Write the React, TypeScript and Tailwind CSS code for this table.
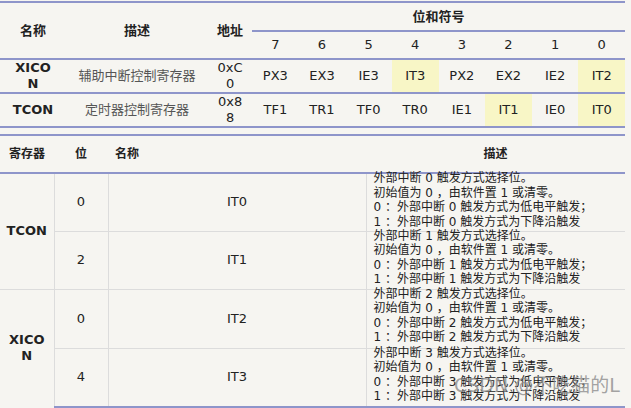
import React from "react";

const FONT = { fontFamily: '"DejaVu Sans", "Noto Sans CJK SC", sans-serif' };

const bits = ["7", "6", "5", "4", "3", "2", "1", "0"];
const xicon = ["PX3", "EX3", "IE3", "IT3", "PX2", "EX2", "IE2", "IT2"];
const tcon = ["TF1", "TR1", "TF0", "TR0", "IE1", "IT1", "IE0", "IT0"];
const hlX = [false, false, false, true, false, false, false, true];
const hlT = [false, false, false, false, false, true, false, true];

function Desc({ n }: { n: string }) {
  return (
    <div className="-mt-[3px] text-[12px] leading-[14.5px] text-[#222]">
      <div>外部中断 {n} 触发方式选择位。</div>
      <div>初始值为 0 ，由软件置 1 或清零。</div>
      <div>0 ：外部中断 {n} 触发方式为低电平触发；</div>
      <div>1 ：外部中断 {n} 触发方式为下降沿触发</div>
    </div>
  );
}

export default function App() {
  return (
    <div className="relative w-[631px] h-[408px] overflow-hidden bg-[#f6f5f1] text-[#222]" style={FONT}>
      <table className="table-fixed border-collapse w-[625px] mt-[1px] text-[13px] leading-[16px]">
        <colgroup>
          <col className="w-[66px]" />
          <col className="w-[142px]" />
          <col className="w-[44px]" />
          {bits.map((b) => (
            <col key={b} className="w-[46.6px]" />
          ))}
        </colgroup>
        <thead>
          <tr className="h-[29px]">
            <th rowSpan={2} className="border-t-2 border-b-2 border-[#8e95ca] font-bold text-[13px]">名称</th>
            <th rowSpan={2} className="border-t-2 border-b-2 border-[#8e95ca] font-bold text-[13px]">描述</th>
            <th rowSpan={2} className="border-t-2 border-b-2 border-[#8e95ca] font-bold text-[13px]">地址</th>
            <th colSpan={8} className="border-t-2 border-b-2 border-[#8e95ca] font-bold text-[13px]">位和符号</th>
          </tr>
          <tr className="h-[28px]">
            {bits.map((b) => (
              <td key={b} className="border-b-2 border-[#8e95ca] text-center font-normal">{b}</td>
            ))}
          </tr>
        </thead>
        <tbody>
          <tr className="h-[32px]">
            <td className="border-b-2 border-[#8e95ca] text-center font-bold px-[11px] break-all">XICON</td>
            <td className="border-b-2 border-[#8e95ca] text-center text-[#555]">辅助中断控制寄存器</td>
            <td className="border-b-2 border-[#8e95ca] text-center px-[8px] break-all">0xC0</td>
            {xicon.map((v, i) => (
              <td key={v} className={"border-b-2 border-[#8e95ca] text-center " + (hlX[i] ? "bg-[#f8f6c6]" : "")}>{v}</td>
            ))}
          </tr>
          <tr className="h-[32px]">
            <td className="border-b-2 border-[#8e95ca] text-center font-bold px-[11px] break-all">TCON</td>
            <td className="border-b-2 border-[#8e95ca] text-center text-[#555]">定时器控制寄存器</td>
            <td className="border-b-2 border-[#8e95ca] text-center px-[8px] break-all">0x88</td>
            {tcon.map((v, i) => (
              <td key={v} className={"border-b-2 border-[#8e95ca] text-center " + (hlT[i] ? "bg-[#f8f6c6]" : "")}>{v}</td>
            ))}
          </tr>
        </tbody>
      </table>

      <table className="table-fixed border-collapse w-[625px] mt-[6px] text-[13px] leading-[16px]">
        <colgroup>
          <col className="w-[54px]" />
          <col className="w-[54px]" />
          <col className="w-[258px]" />
          <col className="w-[259px]" />
        </colgroup>
        <thead>
          <tr className="h-[38px]">
            <th className="border-t-2 border-b-2 border-[#8e95ca] text-[12px] font-bold text-center">寄存器</th>
            <th className="border-t-2 border-b-2 border-[#8e95ca] text-[12px] font-bold text-center">位</th>
            <th className="border-t-2 border-b-2 border-[#8e95ca] text-[12px] font-bold text-left pl-[7px]">名称</th>
            <th className="border-t-2 border-b-2 border-[#8e95ca] text-[12px] font-bold text-center">描述</th>
          </tr>
        </thead>
        <tbody>
          <tr className="h-[58px]">
            <td rowSpan={2} className="border-b border-r border-[#dcdcdc] text-center font-bold">TCON</td>
            <td className="border-b border-r border-[#dcdcdc] text-center">0</td>
            <td className="border-b border-r border-[#dcdcdc] text-center">IT0</td>
            <td className="border-b border-[#dcdcdc] align-top pl-[7px]"><Desc n="0" /></td>
          </tr>
          <tr className="h-[58px]">
            <td className="border-b border-r border-[#dcdcdc] text-center">2</td>
            <td className="border-b border-r border-[#dcdcdc] text-center">IT1</td>
            <td className="border-b border-[#dcdcdc] align-top pl-[7px]"><Desc n="1" /></td>
          </tr>
          <tr className="h-[59px]">
            <td rowSpan={2} className="border-r border-[#dcdcdc] text-center font-bold px-[8px] break-all">XICON</td>
            <td className="border-b border-r border-[#dcdcdc] text-center">0</td>
            <td className="border-b border-r border-[#dcdcdc] text-center">IT2</td>
            <td className="border-b border-[#dcdcdc] align-top pl-[7px]"><Desc n="2" /></td>
          </tr>
          <tr className="h-[59px]">
            <td className="border-b-2 border-r border-b-[#8e95ca] border-r-[#dcdcdc] text-center">4</td>
            <td className="border-b-2 border-r border-b-[#8e95ca] border-r-[#dcdcdc] text-center">IT3</td>
            <td className="border-b-2 border-[#8e95ca] align-top pl-[7px]"><Desc n="3" /></td>
          </tr>
        </tbody>
      </table>

      <div className="absolute left-[454px] top-[374px] text-[19px] leading-[22px] text-[#8c8c8c]/80 whitespace-nowrap pointer-events-none">
        CSDN @不吃猫的L
      </div>
    </div>
  );
}
